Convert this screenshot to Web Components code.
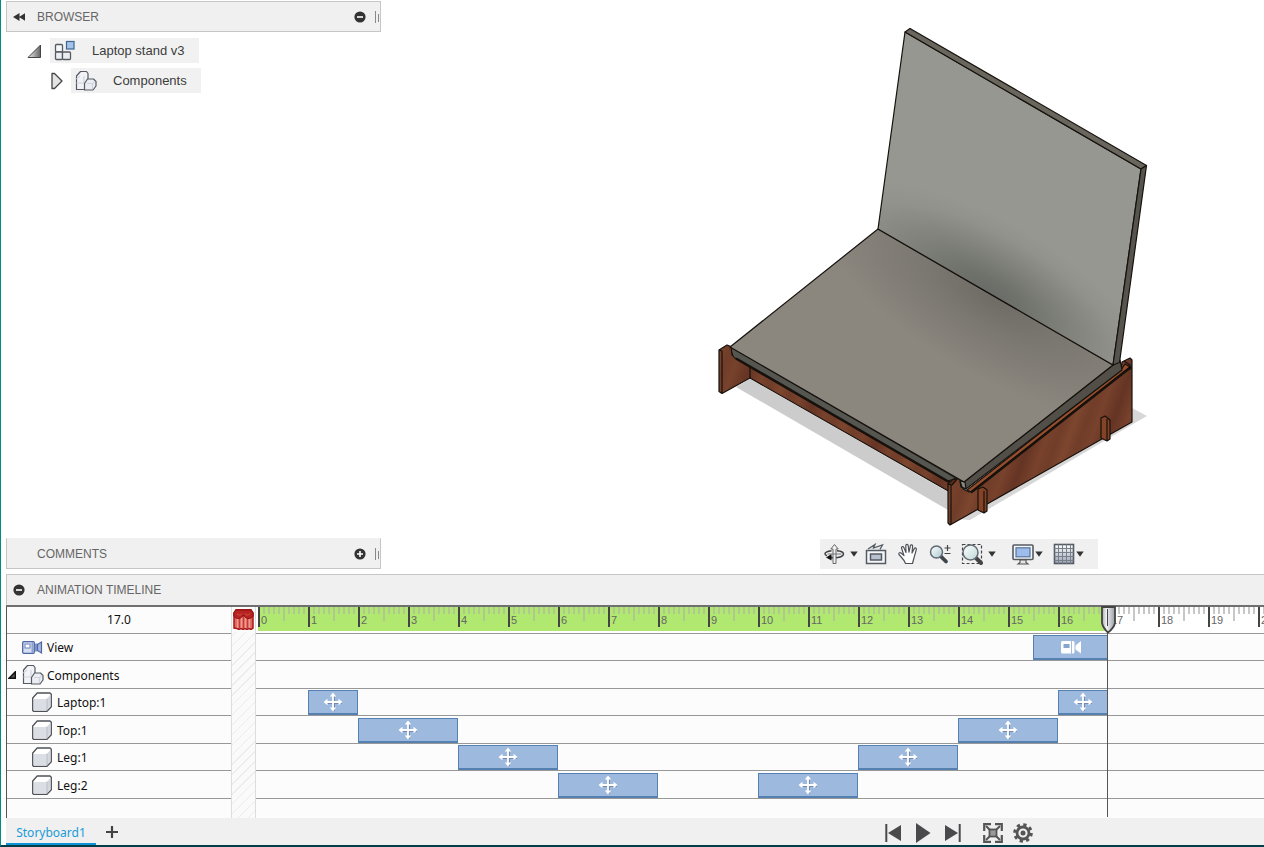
<!DOCTYPE html>
<html lang="en">
<head>
<meta charset="utf-8">
<title>Laptop stand v3 – Animation</title>
<style>
  html, body { margin: 0; }
  body { font-family: "Liberation Sans", Arial, sans-serif; color: #444; background: #fff; }
</style>
</head>
<body>
<stand-app></stand-app>

<script>
const ICONS = {
  rewind: [12, 8, '<path d="M6.500 0v8L0 4zM12.500 0v8L6 4z" fill="#333"/>'],
  minus: [12, 12, '<circle cx="6" cy="6" r="5.6" fill="#333"/><path d="M3 6h6" stroke="#fff" stroke-width="1.6"/>'],
  plus: [12, 12, '<circle cx="6" cy="6" r="5.6" fill="#333"/><path d="M3 6h6M6 3v6" stroke="#fff" stroke-width="1.6"/>'],
  grip: [6, 14, '<path d="M1.500 1v12" stroke="#888"/><path d="M4.500 4v8" stroke="#888"/>'],
  open: [15, 14, '<defs><linearGradient id="g" x1="0" x2="1"><stop stop-color="#eee"/><stop offset="1" stop-color="#666"/></linearGradient></defs><path d="M13.500 1v12.500H1z" fill="url(#g)" stroke="#444"/>'],
  closed: [12, 18, '<path d="M1 1.500h2.500l7.500 7.500-7.500 7.500H1z" fill="#e3e3e6" stroke="#444" stroke-width="1.300" stroke-linejoin="round"/>'],
  tinyOpen: [8, 8, '<path d="M7.300 .8v6.500H1z" fill="#555" stroke="#111" stroke-width="1.400"/>'],
  assembly: [22, 22, '<g stroke="#555b63" stroke-width="1.300"><rect x="1.500" y="4.500" width="7" height="7.500" rx="1" fill="#f7f8fa"/><rect x="1.500" y="12" width="7" height="7.500" rx="1" fill="#eceef2"/><rect x="8.500" y="12" width="8" height="7.500" rx="1" fill="#eceef2"/></g><rect x="12.500" y="1.500" width="7.500" height="7.500" fill="#a5c3e8" stroke="#3f6595" stroke-width="1.200"/>'],
  parts: [22, 22, '<g stroke="#555b63" stroke-width="1.200" stroke-linejoin="round"><path d="M1.500 19.500V6l4-4.500h6l1.500 2v16z" fill="#f2f3f7"/><path d="M1.500 13H9M5 6L1.500 9M9 6v7" fill="none" stroke="#d3d6df"/><path d="M9.500 20v-6.500l3-4.500h6l2.500 2.500V16l-3 4z" fill="#eceef4"/><path d="M12 13.500h6l2-2.500M17.500 14v5" fill="none" stroke="#d0d3dc"/></g>'],
  cube: [20, 20, '<path d="M.700 18.500V6l4.500-5H18l1.300 1.200v12.500L15 19.300H1.500z" fill="#fff" stroke="#4e5258" stroke-width="1.300" stroke-linejoin="round"/><path d="M2 7h12.500v11H2z" fill="#dcdee5"/><path d="M15.500 6.500l2.500-3.500v11l-2.500 3.500z" fill="#d4d7e0"/><path d="M15 6.500v12" stroke="#a9acb5"/>'],
  camera: [21, 15, '<rect x=".7" y="1.700" width="11.600" height="11.600" rx="1" fill="#d5def2" stroke="#4e68a5" stroke-width="1.300"/><rect x="3" y="4" width="5" height="4" fill="#fff" stroke="#6d83b8"/><path d="M10.500 2v11" stroke="#90a3cf" stroke-width="2"/><rect x="13" y="3.500" width="2.500" height="8" fill="#8097c8"/><path d="M15.500 4.500l4-2.500v11l-4-2.500z" fill="#a6b7de" stroke="#4e68a5" stroke-width="1.200"/>'],
  cameraWhite: [20, 15, '<rect y="1" width="13.500" height="12.500" rx="1.500" fill="#fff"/><path d="M2.500 4h6v4h-6z" fill="#86a5cf"/><path d="M10.500 1v13" stroke="#a5bddd"/><path d="M14.500 5.500L20 1v12.500l-5.500-4z" fill="#fff"/>'],
  move: [20, 20, '<g transform="translate(1 1)" opacity=".35"><path d="M10 2v16M2 10h16" stroke="#335" stroke-width="2"/></g><path d="M10 3v14M3 10h14" stroke="#fff" stroke-width="1.800"/><path d="M10 .5l3.200 4H6.800zM10 19.500l3.200-4H6.800zM.5 10l4-3.200v6.400zM19.500 10l-4-3.200v6.400z" fill="#fff"/>'],
  curtain: [21, 21, '<path d="M1 4L3 .8h15L20 4v15l-2 1.500-2-1-2 1-2-1-2 1-2-1-2 1-2-1L1 19z" fill="#df6860" stroke="#aa1717" stroke-width="1.500"/><path d="M4.500 9v10M8.500 8v11M12.500 8v11M16.500 9v10" stroke="#f09b92" stroke-width="1.300"/><path d="M6.500 9v10M10.500 6v14M14.500 9v10" stroke="#c23c37"/><path d="M.8 4L3 1h15l2.200 3v3c-3 4-8 3-9.700-1C8.500 10 3.500 11 .8 7z" fill="#b72320" stroke="#901313"/><path d="M4 4.500c2 2 4 2 5 0M12 4.500c1 2 4 2 5 0" fill="none" stroke="#d5564e"/>'],
  orbit: [22, 22, '<path d="M14 7.800c4 .4 6.500 1.600 6.500 3.200 0 2.200-4 3.800-9 3.800-2 0-4-.2-5.500-.8M8.500 7.700c-4 .5-6.500 1.600-6.500 3 0 .8.600 1.500 2 2" fill="none" stroke="#3c3f44" stroke-width="1.500"/><path d="M10 20.500V6H7.800l3.700-4.500L15.200 6H13v14.500z" fill="#f0f1f3" stroke="#666"/><path d="M3 14.500l5.500-3.500v6.500z" fill="#111"/><path d="M4.500 11h14" stroke="#777"/>'],
  look: [22, 22, '<path d="M3 6l7-4.500-1.500 3.500 9-3-2.500 4.500" fill="#e4e6e9" stroke="#555b63" stroke-width="1.300"/><rect x="1.500" y="7.500" width="19" height="13" fill="#f6f7f9" stroke="#555b63" stroke-width="1.500"/><rect x="5.500" y="11" width="11" height="6" fill="#b9c1ce" stroke="#555b63" stroke-width="1.500"/>'],
  hand: [22, 22, '<path d="M8.500 20.500c-1-3.500-3.500-5.500-6.500-9-.8-1.300.8-2.500 2-1.500l3 2.600L4.500 5c-.2-1.600 1.700-2 2.300-.6L9 9.500 8.800 2.700c0-1.600 2.200-1.700 2.400-.1l.8 6.600 1.400-6.400c.5-1.500 2.500-1 2.200.5L15 10l2.300-4.400c.8-1.200 2.500-.4 2 1-1 3.400-1.500 6-2.500 8.900l-1.300 5z" fill="#fff" stroke="#4e5258" stroke-width="1.200" stroke-linejoin="round"/>'],
  zoom: [22, 22, '<defs><linearGradient id="l" x2="1" y2="1"><stop stop-color="#fff"/><stop offset="1" stop-color="#acc9d0"/></linearGradient></defs><path d="M12 13.500l5 5" stroke="#3e454d" stroke-width="3.800" stroke-linecap="round"/><circle cx="7.500" cy="9" r="6" fill="url(#l)" stroke="#606a74" stroke-width="1.500"/><path d="M15.500 5h6M18.500 2v6M15.500 10.500h6" stroke="#444" stroke-width="1.200"/>'],
  fit: [22, 22, '<defs><linearGradient id="m" x2="1" y2="1"><stop stop-color="#fff"/><stop offset="1" stop-color="#bdd8d8"/></linearGradient></defs><rect x="1.500" y="1.500" width="19" height="19" fill="none" stroke="#444" stroke-width="1.200" stroke-dasharray="3 2"/><path d="M15.500 15.500l4.500 4.500" stroke="#444" stroke-width="4" stroke-linecap="round"/><circle cx="9.500" cy="9.500" r="7.500" fill="url(#m)" stroke="#646d75" stroke-width="1.500"/>'],
  display: [22, 22, '<rect x="1" y="2" width="20" height="14.500" rx="1" fill="#f5f5f5" stroke="#555b63" stroke-width="1.600"/><rect x="4" y="4.800" width="14" height="9" fill="#9ebcec" stroke="#54759f" stroke-width="1.200"/><path d="M8 17h6v2.500l2 1.500H6l2-1.500z" fill="#e5e5e8" stroke="#555" stroke-width="1.100"/>'],
  grid: [22, 22, '<defs><linearGradient id="n" y2="1" x2="0"><stop stop-color="#fff"/><stop offset="1" stop-color="#9ba3b5"/></linearGradient></defs><rect x="1.500" y="1.500" width="19" height="19" fill="url(#n)" stroke="#555b63" stroke-width="1.600"/><path d="M5.500 1.500v19M9.500 1.500v19M13.500 1.500v19M17.500 1.500v19M1.500 5.500h19M1.500 9.500h19M1.500 13.500h19M1.500 17.500h19" stroke="#777f8b"/>'],
  caret: [8, 6, '<path d="M.3.500h7.400L4 5.800z" fill="#333"/>'],
  add: [12, 12, '<path d="M6 0v12M0 6h12" stroke="#444" stroke-width="2.200"/>'],
  prev: [16, 18, '<path d="M1.300 0v18" stroke="#4a4a4c" stroke-width="2"/><path d="M16 1v16L3 9z" fill="#4a4a4c"/>'],
  play: [16, 20, '<path d="M1 0l14.500 10L1 20z" fill="#4a4a4c"/>'],
  next: [16, 18, '<path d="M14.700 0v18" stroke="#4a4a4c" stroke-width="2"/><path d="M0 1v16l13-8z" fill="#4a4a4c"/>'],
  expand: [20, 20, '<path d="M1.200 8V1.200H8M12 1.200h6.800V8M18.800 12v6.800H12M8 18.800H1.200V12" fill="none" stroke="#555" stroke-width="2.200"/><rect x="6.500" y="6.500" width="7" height="7" fill="#999" stroke="#555" stroke-width="1.800"/><path d="M3 3l4 4M17 3l-4 4M17 17l-4-4M3 17l4-4" stroke="#555" stroke-width="2"/>'],
  gear: [20, 20, '<g fill="none" stroke="#555"><circle cx="10" cy="10" r="8.300" stroke-width="3" stroke-dasharray="3.260 3.260"/><circle cx="10" cy="10" r="6" stroke-width="2.800"/></g><circle cx="10" cy="10" r="2.500" fill="#555"/>']
};

function define(name, css, html) {
  customElements.define(name, class extends HTMLElement {
    constructor() {
      super();
      this.attachShadow({ mode: "open" });
    }
    connectedCallback() {
      const body = typeof html === "function" ? html(this) : html;
      this.shadowRoot.innerHTML = `<style>${css}</style>${body}`;
    }
  });
}

define("ui-icon", `:host{display:block;flex:none} svg{display:block}`, el => {
  const [w, h, art] = ICONS[el.getAttribute("name")];
  return `<svg width="${w}" height="${h}" viewBox="0 0 ${w} ${h}" aria-hidden="true">${art}</svg>`;
});

define("icon-button", `
  :host{display:block;flex:none}
  button{display:block;margin:0;padding:0;border:0;background:none}`,
  el => `<button type="button" aria-label="${el.getAttribute("label")}"><ui-icon name="${el.getAttribute("icon")}"></ui-icon></button>`);

/* Title bar of a dockable panel */
define("panel-bar", `
  :host{display:flex;align-items:center;height:31px;box-sizing:border-box;background:#f0f0f0;
    border:1px solid #c6c6c6;padding:0 0 0 6px;font-size:12px;line-height:16px;color:#666}
  .lead{width:24px;flex:none}
  h2{font:inherit;margin:0;flex:1}
  .tail{display:flex;align-items:center;gap:8px}`,
  `<div class="lead"><slot name="lead"></slot></div><h2><slot></slot></h2><div class="tail"><slot name="tail"></slot></div>`);

define("tree-node", `
  :host{display:flex;align-items:center;height:25px;gap:8px}
  .label{display:flex;align-items:center;height:25px;background:#f1f1f1;padding:0 14px 0 4px;gap:16px;
    font-size:13px;line-height:16px;color:#3c3c3c}
  span{padding-top:1px}`,
  el => `<icon-button label="Toggle" icon="${el.getAttribute("state")}"></icon-button>
    <div class="label"><ui-icon name="${el.getAttribute("icon")}"></ui-icon><span><slot></slot></span></div>`);

define("browser-panel", `
  :host{display:block;padding-top:1px}
  .tree{display:flex;flex-direction:column;gap:5px;padding:6px 0 0 21px}
  .child{margin-left:24px}`,
  `<panel-bar><icon-button slot="lead" label="Collapse browser" icon="rewind"></icon-button>BROWSER
    <icon-button slot="tail" label="Hide" icon="minus"></icon-button><ui-icon slot="tail" name="grip"></ui-icon></panel-bar>
  <div class="tree">
    <tree-node state="open" icon="assembly">Laptop stand v3</tree-node>
    <tree-node class="child" state="closed" icon="parts">Components</tree-node>
  </div>`);

define("comments-panel", `:host{display:block} panel-bar{border-top-color:#f0f0f0}`,
  `<panel-bar>COMMENTS<icon-button slot="tail" label="Show" icon="plus"></icon-button><ui-icon slot="tail" name="grip"></ui-icon></panel-bar>`);

define("view-toolbar", `
  :host{display:flex;align-items:center;height:30px;box-sizing:border-box;background:#f0f0f0;padding:0 14px 0 3px;gap:10px}
  div{display:flex;align-items:center;gap:5px}
  .tight{gap:1px}
  .look{margin-left:-3px}
  .screen{margin-left:6px}`,
  `<div><icon-button label="Orbit" icon="orbit"></icon-button><icon-button label="Orbit options" icon="caret"></icon-button></div>
   <icon-button class="look" label="Look at" icon="look"></icon-button>
   <icon-button label="Pan" icon="hand"></icon-button>
   <icon-button label="Zoom" icon="zoom"></icon-button>
   <div><icon-button label="Fit" icon="fit"></icon-button><icon-button label="Fit options" icon="caret"></icon-button></div>
   <div class="tight screen"><icon-button label="Display settings" icon="display"></icon-button><icon-button label="Display options" icon="caret"></icon-button></div>
   <div class="tight"><icon-button label="Grid" icon="grid"></icon-button><icon-button label="Grid options" icon="caret"></icon-button></div>`);

/* Laptop resting on the wooden stand */
define("model-view", `:host{display:block;min-height:0;overflow:hidden} svg{display:block;width:100%;height:100%}`, `
<svg viewBox="381 0 883 539" role="img" aria-label="Laptop on wooden stand">
  <defs>
    <radialGradient id="shadeUp" gradientUnits="userSpaceOnUse" cx="0" cy="0" r="1" gradientTransform="translate(988 293) rotate(30) scale(185 72)">
      <stop stop-color="#696b66"/><stop offset=".2" stop-color="#6f716b"/><stop offset=".5" stop-color="#80827b"/><stop offset=".8" stop-color="#90928b"/><stop offset="1" stop-color="#959790"/></radialGradient>
    <radialGradient id="shadeDown" gradientUnits="userSpaceOnUse" cx="0" cy="0" r="1" gradientTransform="translate(996 297) rotate(30) scale(200 80)">
      <stop stop-color="#6d6b64"/><stop offset=".4" stop-color="#7b7871"/><stop offset="1" stop-color="#8b877f"/></radialGradient>
    <linearGradient id="wood" gradientUnits="userSpaceOnUse" x1="0" y1="0" x2="34" y2="12" spreadMethod="reflect">
      <stop stop-color="#7d462e"/><stop offset=".3" stop-color="#703d29"/><stop offset=".6" stop-color="#78422c"/><stop offset="1" stop-color="#653424"/></linearGradient>
  </defs>
  <path d="M736 387l14-8 198 113v18z" fill="#ccc"/>
  <path d="M1132 408l15 8-14 8-163 96-12-1 174-100z" fill="#d7d7d7"/>
  <g stroke="#16110d" stroke-width="1.200" stroke-linejoin="round">
    <path d="M748 364l202 114v14l-200-114z" fill="url(#wood)"/>
    <path d="M719 350l8-5 5 2v8l18 11v12l-28 15.500-3-2z" fill="url(#wood)"/>
    <path d="M719 350l3 1v42" fill="none"/>
    <path d="M948 484l9-6 5 3 1 8 6 3 152-122 1-8 8-4 2 2v62L950 525l-2-2z" fill="url(#wood)"/>
    <path d="M967 490L1121 370l4-6 5 3-159 125z" fill="#964e2c"/>
    <path d="M971 492.500L1131 367" stroke-width="2.400"/>
    <path d="M1124 361l6 4v5M948 484l3 1v39" fill="none"/>
    <path d="M948 484l4-4 6-2-6 7z" fill="#5a2c1c"/>
    <path d="M1101 418l4-2 5 4v19l-3 2-6-3z" fill="#844326"/><path d="M1107 419v22" fill="none"/>
    <path d="M978 489l5-2 4 3v21l-3 2-6-3z" fill="#844326"/><path d="M984 491v22" fill="none"/>
    <path d="M731 347l225 131-5 2-4 1L735 358q-3-1-4-11z" fill="#555650"/>
    <path d="M736 358.500L949 482" stroke-width="2.600"/>
    <path d="M964 482L1113 365l7-5 2 10-156 119-5-2-1-6z" fill="#514f48"/>
    <path d="M960 481l5 1 1 7-4-2z" fill="#858b86"/>
    <path d="M730 347L878 229l235 136-149 117z" fill="url(#shadeDown)"/>
    <path d="M905 32l236 137-28 196-235-136z" fill="url(#shadeUp)"/>
    <path d="M905 32l5-3.500 236.500 137L1141 169z" fill="#69665d"/>
    <path d="M1141 169l5.500-3.500-27 197-6.500 2.500z" fill="#56544d"/>
  </g>
</svg>`);

/* Left-hand label of one timeline track */
define("track-name", `
  :host{display:flex;align-items:center;box-sizing:border-box;border-bottom:1px solid #989898;gap:5px;
    padding-left:15px;font:12px/16px "Noto Sans","Open Sans",sans-serif;color:#111}
  :host([level="1"]){padding-left:25px}
  :host([toggle]){padding-left:1px}
  ui-icon{width:20px}
  span{padding-top:2px}
  icon-button{margin-right:1px}`,
  el => `${el.hasAttribute("toggle") ? '<icon-button label="Collapse" icon="tinyOpen"></icon-button>' : ""}
    <ui-icon name="${el.getAttribute("icon")}"></ui-icon><span><slot></slot></span>`);

define("time-ruler", `
  :host{display:block;box-sizing:border-box;height:27px;border-bottom:1px solid #989898;padding-left:2px;background:#fff;overflow:hidden}
  ol{display:flex;margin:0;padding:0;list-style:none;height:24px}
  li{flex:none;box-sizing:border-box;width:50px;height:24px;padding:5px 0 0 3px;font-size:11px;line-height:16px;color:#666;
    background:
      linear-gradient(#444,#444) 0 0/2px 20px no-repeat,
      linear-gradient(var(--tick),var(--tick)) 25px 0/2px 14px no-repeat,
      repeating-linear-gradient(90deg,var(--tick) 0 2px,transparent 2px 5px) 5px 0/45px 7px no-repeat;
    --tick:#c8c8c8}
  .used{background-color:#b0e870;--tick:#afc890}`,
  () => "<ol>" + Array.from({ length: 21 }, (_, i) => `<li class="${i < 17 ? "used" : ""}">${i}</li>`).join("") + "</ol>");

define("time-clip", `
  :host{display:flex;align-items:center;justify-content:center;box-sizing:border-box;height:25px;align-self:end;
    margin-top:1px;background:#9db9de;border:1px solid #5480b2;border-bottom-width:2px}`,
  el => `<ui-icon name="${el.getAttribute("icon") || "move"}"></ui-icon>`);

/* One lane; every grid column is half a second */
define("time-lane", `
  :host{display:grid;grid-template-columns:repeat(80,25px);box-sizing:border-box;min-width:0;overflow:hidden;
    border-bottom:1px solid #989898;padding-left:2px}`, `<slot></slot>`);

define("play-head", `
  :host{position:absolute;top:-1px;bottom:1px;left:845px;width:16px;background:linear-gradient(#555,#555) 6px 0/1px 100% no-repeat}
  svg{display:block}`,
  `<svg width="16" height="28" viewBox="0 0 16 28" aria-hidden="true"><defs><linearGradient id="p" x2="1" y2="0"><stop stop-color="#aaa"/><stop offset=".35" stop-color="#f2f3f6"/><stop offset="1" stop-color="#999ca3"/></linearGradient></defs>
  <path d="M1 1h13v16q-1 5-7 9.500Q2 22 1 17z" fill="url(#p)" stroke="#444" stroke-width="1.800"/><path d="M6.500 3v17" stroke="#444"/></svg>`);

define("animation-timeline", `
  :host{display:block;min-width:0}
  panel-bar{border-right:0;border-bottom-color:#f0f0f0}
  .body{display:grid;grid-template-columns:225px 25px minmax(0,1fr);border-top:2px solid #707070;background:#fcfcfc}
  .names{box-sizing:border-box;border-left:1px solid #555}
  .rows{display:grid;grid-template-rows:repeat(3,27px 28px) 19px}
  .time{box-sizing:border-box;height:27px;border-bottom:1px solid #989898;text-align:center;
    font:12px/26px "Noto Sans","Open Sans",sans-serif;color:#111}
  .hatch{box-sizing:border-box;border:solid #ddd;border-width:0 1px;
    background:repeating-linear-gradient(135deg,#fafafa 0 6px,#ececec 6px 7px)}
  .curtain{padding:2px 1px;background:#fcfcfc}
  .tracks{position:relative;min-width:0;overflow:clip;overflow-clip-margin:2px}
  footer{display:flex;justify-content:space-between;height:27px;background:#f0f0f0}
  .tabs{display:flex;align-items:center;gap:10px}
  .tab{box-sizing:border-box;height:27px;width:90px;border:0;border-bottom:2px solid #1092d6;background:none;padding:4px 0 0;margin:0;
    font:12px/16px "Noto Sans","Open Sans",sans-serif;color:#1a9bd8}
  .controls{display:flex;align-items:center;justify-content:center;gap:14px;width:610px;padding-top:2px;box-sizing:border-box}
  .wide{margin-left:8px}
  .near{margin-left:-4px}`,
  `<panel-bar><icon-button slot="lead" label="Hide timeline" icon="minus"></icon-button>ANIMATION TIMELINE</panel-bar>
  <div class="body">
    <div class="names">
      <div class="time">17.0</div>
      <div class="rows">
        <track-name icon="camera">View</track-name>
        <track-name icon="parts" toggle>Components</track-name>
        <track-name icon="cube" level="1">Laptop:1</track-name>
        <track-name icon="cube" level="1">Top:1</track-name>
        <track-name icon="cube" level="1">Leg:1</track-name>
        <track-name icon="cube" level="1">Leg:2</track-name>
      </div>
    </div>
    <div class="hatch"><div class="curtain"><ui-icon name="curtain"></ui-icon></div></div>
    <div class="tracks">
      <time-ruler></time-ruler>
      <div class="rows">
        <time-lane><time-clip icon="cameraWhite" style="grid-column:32/35"></time-clip></time-lane>
        <time-lane></time-lane>
        <time-lane><time-clip style="grid-column:3/5"></time-clip><time-clip style="grid-column:33/35"></time-clip></time-lane>
        <time-lane><time-clip style="grid-column:5/9"></time-clip><time-clip style="grid-column:29/33"></time-clip></time-lane>
        <time-lane><time-clip style="grid-column:9/13"></time-clip><time-clip style="grid-column:25/29"></time-clip></time-lane>
        <time-lane><time-clip style="grid-column:13/17"></time-clip><time-clip style="grid-column:21/25"></time-clip></time-lane>
      </div>
      <play-head></play-head>
    </div>
  </div>
  <footer>
    <div class="tabs"><button type="button" class="tab">Storyboard1</button><icon-button label="New storyboard" icon="add"></icon-button></div>
    <div class="controls">
      <icon-button label="To start" icon="prev"></icon-button>
      <icon-button label="Play" icon="play"></icon-button>
      <icon-button label="To end" icon="next"></icon-button>
      <icon-button class="wide" label="Fit timeline" icon="expand"></icon-button>
      <icon-button class="near" label="Settings" icon="gear"></icon-button>
    </div>
  </footer>`);

define("stand-app", `
  :host{display:grid;grid-template-rows:minmax(0,1fr) auto;gap:5px;height:100vh;min-height:500px;box-sizing:border-box;
    border-left:1px solid #008a8c;border-bottom:2px solid #003f47;padding-left:5px}
  main{display:grid;grid-template-columns:375px minmax(0,1fr);min-height:0}
  .side{display:flex;flex-direction:column;justify-content:space-between}
  .stage{display:grid;grid-template-rows:minmax(0,1fr) 30px;min-height:0}
  .dock{display:flex;justify-content:center;justify-self:end;width:610px}`,
  `<main>
    <div class="side"><browser-panel></browser-panel><comments-panel></comments-panel></div>
    <div class="stage"><model-view></model-view><div class="dock"><view-toolbar></view-toolbar></div></div>
  </main>
  <animation-timeline></animation-timeline>`);
</script>
</body>
</html>
